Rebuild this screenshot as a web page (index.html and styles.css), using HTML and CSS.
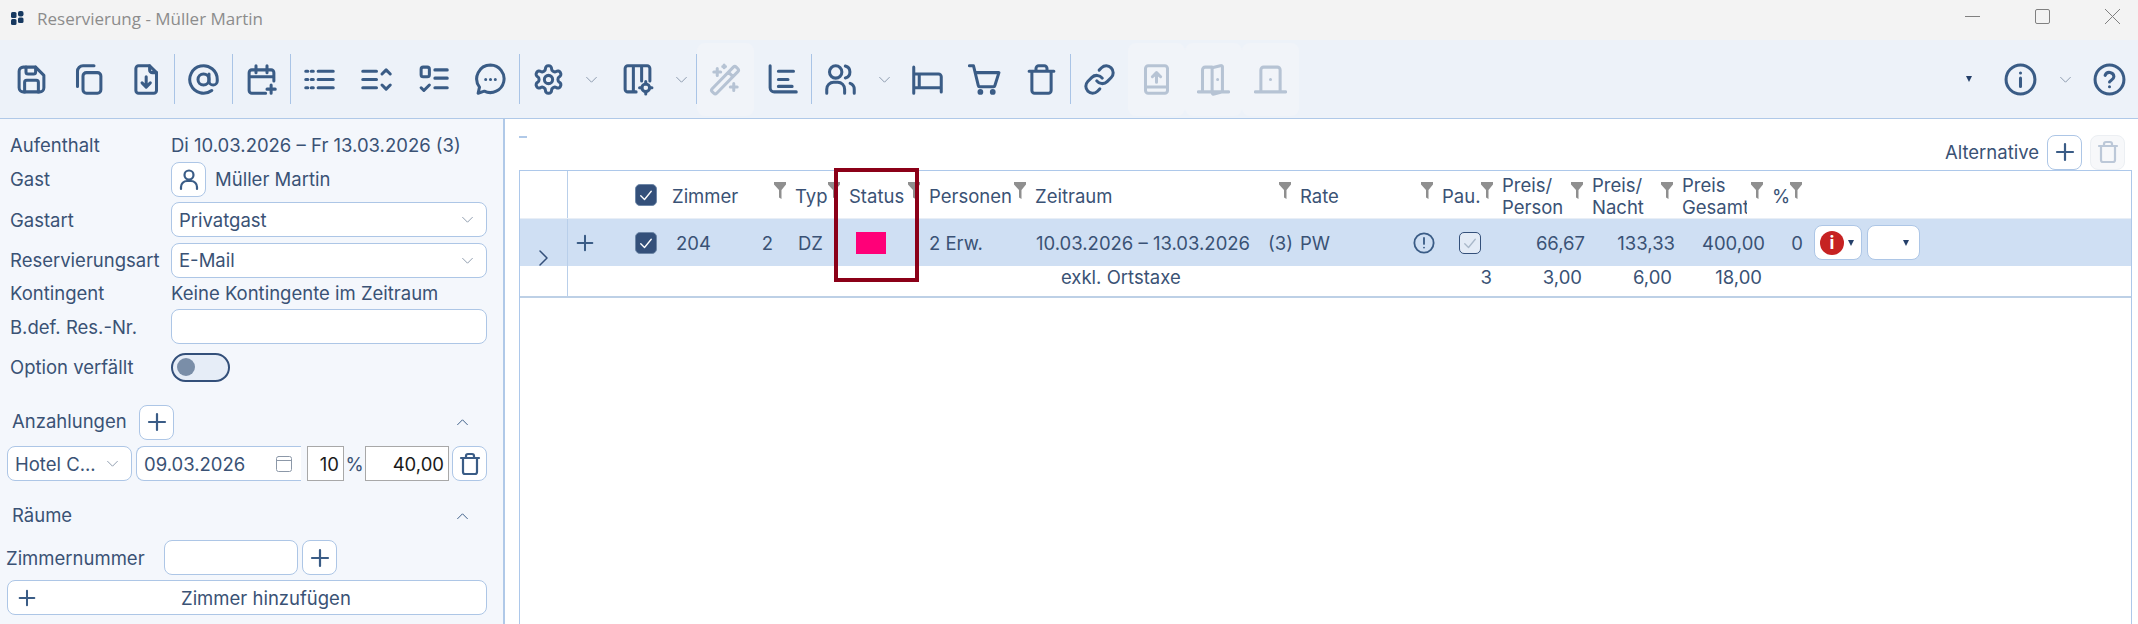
FILE: index.html
```html
<!DOCTYPE html>
<html lang="de">
    <head>
        <meta charset="UTF-8" />
        <title>Reservierung - Müller Martin</title>
        <link rel="stylesheet" href="styles.css">
    </head>
    <body>
        <!-- Shared icons -->
        <svg class="sprite">
            <symbol id="i-plus" viewBox="0 0 24 24"><path d="M12 4v16M4 12h16"/></symbol>
            <symbol id="i-down" viewBox="0 0 24 24"><path d="M3 8l9 9 9-9"/></symbol>
            <symbol id="i-up" viewBox="0 0 24 24"><path d="M3 16l9-9 9 9"/></symbol>
            <symbol id="i-trash" viewBox="0 0 24 24"><path d="M3 6h18M8 6V4a2 2 0 0 1 2-2h4a2 2 0 0 1 2 2v2M5 6v14a2 2 0 0 0 2 2h10a2 2 0 0 0 2-2V6"/></symbol>
            <symbol id="i-filter" viewBox="0 0 12 17"><path d="M0 0h12v2.5L7.5 8v9L5 15.5V8L0 2.5z"/></symbol>
            <symbol id="i-check" viewBox="0 0 24 24"><path d="M5 13l5 5 9-11"/></symbol>
        </svg>

        <!-- Title bar -->
        <div class="titlebar">
            <svg class="logo" viewBox="0 0 13 14"><rect x="0" y="1" width="5.5" height="6" rx="1.5"/><rect x="7" y="0" width="5.5" height="5.5" rx="2"/><rect x="0" y="8" width="5.5" height="6" rx="1.5"/><rect x="7" y="6.5" width="5.5" height="5.5" rx="1.5"/></svg>
            <span class="title-text">Reservierung - Müller Martin</span>
            <div class="win-controls">
                <svg viewBox="0 0 15 15"><path d="M0 7.5h15"/></svg>
                <svg viewBox="0 0 15 15"><rect x="0.5" y="0.5" width="14" height="14" rx="1.5"/></svg>
                <svg viewBox="0 0 15 15"><path d="M0 0l15 15M15 0L0 15"/></svg>
            </div>
        </div>

        <!-- Toolbar -->
        <div class="toolbar">
            <div class="tool"><svg viewBox="0 0 24 24"><path d="M6 3h9l6 6v9a3 3 0 0 1-3 3H6a3 3 0 0 1-3-3V6a3 3 0 0 1 3-3z"/><path d="M7 21v-7a1.5 1.5 0 0 1 1.5-1.5h7A1.5 1.5 0 0 1 17 14v7M8 3v3.5A1.5 1.5 0 0 0 9.500 8h4A1.500 1.500 0 0 0 15 6.500V3"/></svg></div>
            <div class="tool"><svg viewBox="0 0 24 24"><rect x="8" y="7" width="13" height="15" rx="2.500"/><path d="M4 17V6a4 4 0 0 1 4-4h8"/></svg></div>
            <div class="tool"><svg viewBox="0 0 24 24"><path d="M7 2h8l5 5v13a2 2 0 0 1-2 2H7a2 2 0 0 1-2-2V4a2 2 0 0 1 2-2z"/><path d="M15 2v3a2 2 0 0 0 2 2h3M12.500 10v7M9.500 14.500l3 3 3-3"/></svg></div>
            <div class="sep"></div>
            <div class="tool"><svg viewBox="0 0 24 24"><circle cx="12" cy="12" r="4"/><path d="M16 8v5a3 3 0 0 0 6 0v-1a10 10 0 1 0-4 8"/></svg></div>
            <div class="sep"></div>
            <div class="tool"><svg viewBox="0 0 24 24"><path d="M21 13V7a2 2 0 0 0-2-2H5a2 2 0 0 0-2 2v13a2 2 0 0 0 2 2h10M8 2v5M16 2v5M3 10h18M19 16v6M16 19h6"/></svg></div>
            <div class="sep"></div>
            <div class="tool"><svg viewBox="0 0 24 24"><path d="M2 6h1.500M6 6h1.500M11 6h11M2 12h1.500M6 12h1.500M11 12h11M2 18h1.500M6 18h1.500M11 18h11"/></svg></div>
            <div class="tool"><svg viewBox="0 0 24 24"><path d="M2 6h10M2 12h10M2 18h10M16 8l3-3 3 3M16 16l3 3 3-3"/></svg></div>
            <div class="tool"><svg viewBox="0 0 24 24"><rect x="3" y="3" width="6" height="7" rx="1.500"/><path d="M13 5h9M13 11h9M3 18l2 2 4-4M13 18h9"/></svg></div>
            <div class="tool"><svg viewBox="0 0 24 24"><path d="M12 1.500a10 10 0 1 1-4.500 19L3 22l1-4.500A10 10 0 0 1 12 1.500z"/><path d="M8.500 12h.01M12 12h.01M15.500 12h.01"/></svg></div>
            <div class="sep"></div>
            <div class="tool"><svg viewBox="0 0 24 24"><path d="M12.220 2h-.44a2 2 0 0 0-2 2v.18a2 2 0 0 1-1 1.730l-.43.25a2 2 0 0 1-2 0l-.15-.08a2 2 0 0 0-2.730.73l-.22.38a2 2 0 0 0 .73 2.730l.15.1a2 2 0 0 1 1 1.720v.51a2 2 0 0 1-1 1.740l-.15.09a2 2 0 0 0-.73 2.730l.22.38a2 2 0 0 0 2.730.73l.15-.08a2 2 0 0 1 2 0l.43.25a2 2 0 0 1 1 1.730V20a2 2 0 0 0 2 2h.44a2 2 0 0 0 2-2v-.18a2 2 0 0 1 1-1.730l.43-.25a2 2 0 0 1 2 0l.15.08a2 2 0 0 0 2.730-.73l.22-.39a2 2 0 0 0-.73-2.730l-.15-.08a2 2 0 0 1-1-1.740v-.5a2 2 0 0 1 1-1.740l.15-.09a2 2 0 0 0 .73-2.730l-.22-.38a2 2 0 0 0-2.730-.73l-.15.08a2 2 0 0 1-2 0l-.43-.25a2 2 0 0 1-1-1.730V4a2 2 0 0 0-2-2z"/><circle cx="12" cy="12" r="3"/></svg></div>
            <div class="tool-caret wide"><svg viewBox="0 0 24 24"><use href="#i-down"/></svg></div>
            <div class="tool"><svg viewBox="0 0 24 24"><path d="M11 21H5a2 2 0 0 1-2-2V4a2 2 0 0 1 2-2h14a2 2 0 0 1 2 2v9M9 2v19M15 2v11"/><circle cx="18" cy="18" r="2.800"/><path d="M18 13.500v1.700M18 20.800v1.700M13.500 18h1.700M20.800 18h1.700"/></svg></div>
            <div class="tool-caret"><svg viewBox="0 0 24 24"><use href="#i-down"/></svg></div>
            <div class="sep"></div>
            <div class="tool off"><svg viewBox="0 0 24 24"><path d="M3.500 22l-1.200-1.200a1.500 1.500 0 0 1 0-2.100L17.700 3a1.500 1.500 0 0 1 2.100 0l1.200 1.200a1.500 1.500 0 0 1 0 2.100L5.600 22a1.500 1.500 0 0 1-2.100 0zM14.500 7l2.500 2.500M6 4v5M3.500 6.500h5M18 15v5M15.500 17.500h5M11 1.500v2M10 2.500h2"/></svg></div>
            <div class="tool"><svg viewBox="0 0 24 24"><path d="M3 2v16a3 3 0 0 0 3 3h16M9 6h11M9 12h7M9 17h10"/></svg></div>
            <div class="sep"></div>
            <div class="tool"><svg viewBox="0 0 24 24"><path d="M15 22v-3a5 5 0 0 0-5-5H7a5 5 0 0 0-5 5v3"/><circle cx="8.500" cy="6.500" r="4.500"/><path d="M22 22v-3a4.500 4.500 0 0 0-3-4.200M15.500 2.200a4.500 4.500 0 0 1 0 8.700"/></svg></div>
            <div class="tool-caret people"><svg viewBox="0 0 24 24"><use href="#i-down"/></svg></div>
            <div class="tool"><svg viewBox="0 0 24 24"><path d="M2 3v19M22 10v11M2 8h18a2 2 0 0 1 2 2M6 8v10M2 18h20"/></svg></div>
            <div class="tool"><svg viewBox="0 0 24 24"><circle cx="9" cy="21" r="1"/><circle cx="18" cy="21" r="1"/><path d="M1 2h3l3.500 14.500a1 1 0 0 0 1 .8h10a1 1 0 0 0 1-.8L22.500 7H5.500"/></svg></div>
            <div class="tool"><svg viewBox="0 0 24 24"><use href="#i-trash"/></svg></div>
            <div class="sep"></div>
            <div class="tool"><svg viewBox="0 0 24 24"><path d="M10 13a5 5 0 0 0 7.540.54l3-3a5 5 0 0 0-7.070-7.070l-1.720 1.710"/><path d="M14 11a5 5 0 0 0-7.540-.54l-3 3a5 5 0 0 0 7.070 7.070l1.710-1.710"/></svg></div>
            <div class="tool off"><svg viewBox="0 0 24 24"><path d="M6 2h12a2 2 0 0 1 2 2v16a2 2 0 0 1-2 2H6a2 2 0 0 1-2-2V4a2 2 0 0 1 2-2zM4 17.500h16M12 14V7M9 10l3-3 3 3"/></svg></div>
            <div class="tool off"><svg viewBox="0 0 24 24"><path d="M1 21h22M4 21V5a2 2 0 0 1 2-2h5M11 3.500l6-1.500a1 1 0 0 1 1.500 1v18l-6 1.500a1 1 0 0 1-1.500-1zM15 12h.01"/></svg></div>
            <div class="tool off"><svg viewBox="0 0 24 24"><path d="M1 21h22M5 21V5a2 2 0 0 1 2-2h10a2 2 0 0 1 2 2v16M12 12h.01"/></svg></div>

            <div class="toolbar-right">
                <span class="mini-arrow"></span>
                <svg class="round-icon" viewBox="0 0 24 24"><circle cx="12" cy="12" r="10.500"/><path d="M12 11v6M12 7.300h.01"/></svg>
                <div class="right-caret"><svg viewBox="0 0 24 24"><use href="#i-down"/></svg></div>
                <svg class="round-icon" viewBox="0 0 24 24"><circle cx="12" cy="12" r="10.500"/><path d="M8.800 9a3.300 3.300 0 0 1 6.400 1c0 2.200-3.200 2.800-3.200 3.800M12 17.300h.01"/></svg>
            </div>
        </div>

        <div class="content">
            <!-- Left panel -->
            <div class="panel">
                <div class="form">
                    <div>Aufenthalt</div>
                    <div>Di 10.03.2026 – Fr 13.03.2026 (3)</div>
                    <div>Gast</div>
                    <div class="guest">
                        <div class="icon-btn"><svg viewBox="0 0 24 24"><circle cx="12" cy="8" r="4.500"/><path d="M4 22v-2a6 6 0 0 1 6-6h4a6 6 0 0 1 6 6v2"/></svg></div>
                        <span>Müller Martin</span>
                    </div>
                    <div>Gastart</div>
                    <div class="select">Privatgast<svg class="arrow" viewBox="0 0 24 24"><use href="#i-down"/></svg></div>
                    <div>Reservierungsart</div>
                    <div class="select">E-Mail<svg class="arrow" viewBox="0 0 24 24"><use href="#i-down"/></svg></div>
                    <div>Kontingent</div>
                    <div>Keine Kontingente im Zeitraum</div>
                    <div>B.def. Res.-Nr.</div>
                    <div class="select"></div>
                    <div>Option verfällt</div>
                    <div class="toggle"><span class="knob"></span></div>
                </div>

                <!-- Anzahlungen -->
                <div class="section-head first">
                    <span class="section-title">Anzahlungen</span>
                    <div class="icon-btn"><svg viewBox="0 0 24 24"><use href="#i-plus"/></svg></div>
                    <svg class="collapse" viewBox="0 0 24 24"><use href="#i-up"/></svg>
                </div>
                <div class="deposit">
                    <div class="select hotel">Hotel C...<svg class="arrow" viewBox="0 0 24 24"><use href="#i-down"/></svg></div>
                    <div class="select date">09.03.2026<svg class="cal" viewBox="0 0 16 16"><rect x="0.500" y="0.500" width="15" height="15" rx="2"/><path d="M0.500 4.500h15"/></svg></div>
                    <input class="num pct" type="text" value="10" />
                    <span class="pct-sign">%</span>
                    <input class="num amount" type="text" value="40,00" />
                    <div class="icon-btn"><svg viewBox="0 0 24 24"><use href="#i-trash"/></svg></div>
                </div>

                <!-- Räume -->
                <div class="section-head rooms">
                    <span class="section-title">Räume</span>
                    <svg class="collapse" viewBox="0 0 24 24"><use href="#i-up"/></svg>
                </div>
                <div class="room-row">
                    <span class="room-label">Zimmernummer</span>
                    <div class="select room-input"></div>
                    <div class="icon-btn"><svg viewBox="0 0 24 24"><use href="#i-plus"/></svg></div>
                </div>
                <div class="add-room">
                    <svg viewBox="0 0 24 24"><use href="#i-plus"/></svg>
                    <span>Zimmer hinzufügen</span>
                </div>
            </div>

            <!-- Main area -->
            <div class="main">
                <div class="main-head">
                    <span class="dash"></span>
                    <span class="alt-label">Alternative</span>
                    <div class="icon-btn small"><svg viewBox="0 0 24 24"><use href="#i-plus"/></svg></div>
                    <div class="icon-btn small disabled"><svg viewBox="0 0 24 24"><use href="#i-trash"/></svg></div>
                </div>

                <div class="table">
                    <div class="row head">
                        <div class="cell rowhead"></div>
                        <div class="cell"></div>
                        <div class="cell check-cell"><span class="checkbox"><svg viewBox="0 0 24 24"><use href="#i-check"/></svg></span></div>
                        <div class="cell th"><span>Zimmer</span><svg class="filter"><use href="#i-filter"/></svg></div>
                        <div class="cell th"><span>Typ</span><svg class="filter"><use href="#i-filter"/></svg></div>
                        <div class="cell th"><span>Status</span><svg class="filter"><use href="#i-filter"/></svg></div>
                        <div class="cell th"><span>Personen</span><svg class="filter"><use href="#i-filter"/></svg></div>
                        <div class="cell th"><span>Zeitraum</span><svg class="filter"><use href="#i-filter"/></svg></div>
                        <div class="cell th"><span>Rate</span><svg class="filter"><use href="#i-filter"/></svg></div>
                        <div class="cell th"><span>Pau.</span><svg class="filter"><use href="#i-filter"/></svg></div>
                        <div class="cell th"><span>Preis/<br />Person</span><svg class="filter"><use href="#i-filter"/></svg></div>
                        <div class="cell th"><span>Preis/<br />Nacht</span><svg class="filter"><use href="#i-filter"/></svg></div>
                        <div class="cell th"><span class="clip">Preis<br />Gesamt</span><svg class="filter"><use href="#i-filter"/></svg></div>
                        <div class="cell th"><span>%</span><svg class="filter"><use href="#i-filter"/></svg></div>
                        <div class="cell"></div>
                    </div>

                    <div class="row selected">
                        <div class="cell rowhead"><svg class="expand" viewBox="0 0 9 16"><path d="M1 1l7 7-7 7"/></svg></div>
                        <div class="cell"><svg class="row-plus" viewBox="0 0 24 24"><use href="#i-plus"/></svg></div>
                        <div class="cell check-cell"><span class="checkbox"><svg viewBox="0 0 24 24"><use href="#i-check"/></svg></span></div>
                        <div class="cell room-cell"><span>204</span><span>2</span></div>
                        <div class="cell type-cell">DZ</div>
                        <div class="cell"><span class="status-box"></span></div>
                        <div class="cell pad-4">2 Erw.</div>
                        <div class="cell period-cell"><span>10.03.2026 – 13.03.2026</span><span>(3)</span></div>
                        <div class="cell rate-cell"><span>PW</span><svg class="warn" viewBox="0 0 24 24"><circle cx="12" cy="12" r="10.500"/><path d="M12 6.500v6.500M12 17h.01"/></svg></div>
                        <div class="cell"><span class="checkbox light"><svg viewBox="0 0 24 24"><use href="#i-check"/></svg></span></div>
                        <div class="cell num-cell">66,67</div>
                        <div class="cell num-cell">133,33</div>
                        <div class="cell num-cell">400,00</div>
                        <div class="cell num-cell">0</div>
                        <div class="cell action-cell">
                            <div class="drop"><span class="red-info">i</span><span class="mini-arrow"></span></div>
                            <div class="drop blank"><span class="mini-arrow"></span></div>
                        </div>
                    </div>

                    <div class="row sub">
                        <div class="cell rowhead"></div>
                        <div class="cell"></div>
                        <div class="cell"></div>
                        <div class="cell"></div>
                        <div class="cell"></div>
                        <div class="cell"></div>
                        <div class="cell"></div>
                        <div class="cell tax-cell">exkl. Ortstaxe</div>
                        <div class="cell"></div>
                        <div class="cell num-cell">3</div>
                        <div class="cell num-cell">3,00</div>
                        <div class="cell num-cell">6,00</div>
                        <div class="cell num-cell">18,00</div>
                        <div class="cell"></div>
                        <div class="cell"></div>
                    </div>

                    <!-- Red marking over the Status column -->
                    <div class="marker"></div>
                </div>
            </div>
        </div>
    </body>
</html>
```

FILE: styles.css
```css
* {
    margin: 0;
    padding: 0;
    box-sizing: border-box;
}
html, body {
    height: 100%;
    overflow: hidden;
}
body {
    display: flex;
    flex-direction: column;
    font-family: Inter, "Liberation Sans", sans-serif;
    font-size: 18.5px;
    color: #3a5275;
    background-color: white;
}
svg {
    fill: none;
    stroke: #3a5c86;
    stroke-width: 2.2;
    stroke-linecap: round;
    stroke-linejoin: round;
}
.sprite {
    display: none;
}

/* Title bar */
.titlebar {
    height: 40px;
    flex: none;
    display: flex;
    align-items: center;
    padding-left: 11px;
    background-color: #f3f3f3;
}
.logo {
    width: 13px;
    height: 14px;
    margin-bottom: 4px;
    fill: #16385f;
    stroke: none;
}
.title-text {
    margin-left: 13px;
    margin-bottom: 3px;
    font-family: "Open Sans", sans-serif;
    font-size: 17px;
    color: #8c8c8c;
}
.win-controls {
    margin-left: auto;
    padding-right: 18px;
    padding-bottom: 7px;
    display: flex;
    gap: 55px;
}
.win-controls svg {
    width: 15px;
    height: 15px;
    stroke: #808080;
    stroke-width: 1;
    stroke-linecap: butt;
}

/* Toolbar */
.toolbar {
    height: 79px;
    flex: none;
    display: flex;
    align-items: center;
    padding-left: 3px;
    background-color: #edf2f9;
    border-bottom: 1px solid #b0c9e8;
}
.tool {
    width: 57px;
    height: 73px;
    flex: none;
    display: flex;
    align-items: center;
    justify-content: center;
    border-radius: 8px;
}
.tool svg {
    width: 33px;
    height: 33px;
}
.tool.off {
    background-color: #f1f4f9;
}
.tool.off svg {
    stroke: #b6c3d4;
}
.sep {
    width: 1px;
    height: 50px;
    flex: none;
    background-color: #a9c4e6;
}
.tool-caret {
    width: 30px;
    flex: none;
    display: flex;
    justify-content: center;
}
.tool-caret.wide {
    width: 32px;
    padding-right: 4px;
}
.tool-caret svg,
.right-caret svg {
    width: 13px;
    height: 13px;
    stroke: #7f8ea3;
    stroke-width: 1.6;
}
.toolbar-right {
    margin-left: auto;
    padding-right: 12px;
    display: flex;
    align-items: center;
}
.toolbar-right .mini-arrow {
    margin-right: 32px;
}
.round-icon {
    width: 33px;
    height: 33px;
}
.right-caret {
    width: 56px;
    display: flex;
    justify-content: center;
}
.mini-arrow {
    width: 0;
    height: 0;
    border-left: 3.5px solid transparent;
    border-right: 3.5px solid transparent;
    border-top: 6px solid #25406a;
}

.content {
    flex: 1;
    display: flex;
    min-height: 0;
}

/* Left panel */
.panel {
    width: 505px;
    flex: none;
    padding-top: 12px;
    background-color: #f4f7fc;
    border-right: 2px solid #b0c9e8;
}
.form {
    display: grid;
    grid-template-columns: 161px 316px;
    grid-template-rows: 28px 40px 41px 40px 26px 41px 40px;
    align-items: center;
    margin-left: 10px;
}
.guest {
    display: flex;
    align-items: center;
    gap: 9px;
}
.select {
    height: 35px;
    display: flex;
    align-items: center;
    justify-content: space-between;
    padding: 0 12px 0 7px;
    background-color: white;
    border: 1px solid #adc6e6;
    border-radius: 8px;
}
.arrow {
    width: 13px;
    height: 13px;
    stroke: #7f8ea3;
    stroke-width: 1.6;
}
.icon-btn {
    width: 35px;
    height: 35px;
    flex: none;
    display: flex;
    align-items: center;
    justify-content: center;
    background-color: white;
    border: 1px solid #adc6e6;
    border-radius: 8px;
}
.icon-btn svg {
    width: 24px;
    height: 24px;
}
.icon-btn.disabled {
    background-color: #f7f8fa;
    border-color: #eceff3;
}
.icon-btn.disabled svg {
    stroke: #bcc8d8;
}
.toggle {
    width: 59px;
    height: 29px;
    padding-left: 4px;
    display: flex;
    align-items: center;
    background-color: #e6edf7;
    border: 2px solid #34507a;
    border-radius: 15px;
}
.knob {
    width: 18px;
    height: 18px;
    border-radius: 50%;
    background-color: #7a8ea8;
}

/* Sections of the panel */
.section-head {
    height: 36px;
    display: flex;
    align-items: center;
    padding-left: 12px;
    padding-right: 34px;
}
.section-head.first {
    margin-top: 17px;
}
.section-head.rooms {
    margin-top: 17px;
}
.section-title {
    width: 127px;
    padding-bottom: 2px;
}
.collapse {
    width: 13px;
    height: 13px;
    margin-left: auto;
    stroke-width: 1.8;
}
.deposit {
    display: flex;
    align-items: center;
    margin-top: 6px;
    padding-left: 7px;
}
.hotel {
    width: 125px;
    white-space: nowrap;
}
.date {
    width: 165px;
    margin-left: 4px;
    border-right: none;
    border-top-right-radius: 0;
    border-bottom-right-radius: 0;
    padding-right: 9px;
}
.cal {
    width: 16px;
    height: 16px;
    stroke: #8c98a8;
    stroke-width: 1;
}
.num {
    height: 35px;
    padding: 0 4px;
    font: inherit;
    color: #1a1a1a;
    text-align: right;
    background-color: white;
    border: 1px solid #a8a8a8;
}
.pct {
    width: 37px;
    margin-left: 6px;
}
.pct-sign {
    width: 21px;
    text-align: center;
}
.amount {
    width: 84px;
    margin-right: 3px;
}
.room-row {
    display: flex;
    align-items: center;
    gap: 4px;
    margin-top: 6px;
    padding-left: 6px;
}
.room-label {
    width: 154px;
}
.room-input {
    width: 134px;
}
.add-room {
    width: 480px;
    height: 35px;
    margin: 5px 0 0 7px;
    padding-left: 8px;
    display: flex;
    align-items: center;
    background-color: white;
    border: 1px solid #adc6e6;
    border-radius: 8px;
}
.add-room svg {
    width: 22px;
    height: 22px;
}
.add-room span {
    margin-left: 143px;
}

/* Main area */
.main {
    flex: 1;
    min-width: 0;
    padding: 15px 6px 0 14px;
}
.main-head {
    height: 36px;
    display: flex;
    align-items: center;
    gap: 8px;
    padding-right: 7px;
}
.dash {
    width: 8px;
    height: 2px;
    margin-bottom: 30px;
    background-color: #b0c9e8;
}
.alt-label {
    margin-left: auto;
}

/* Table */
.table {
    height: 460px;
    position: relative;
    border: 1px solid #adc8ea;
    border-bottom: none;
}
.row {
    display: grid;
    grid-template-columns: 48px 63px 37px 123px 54px 80px 106px 265px 142px 60px 90px 90px 90px 38px 1fr;
}
.row.head {
    height: 48px;
    border-bottom: 1px solid #e8eef6;
}
.row.selected {
    height: 47px;
    background-color: #cfdff3;
}
.row.sub {
    height: 30px;
    box-sizing: content-box;
    border-bottom: 2px solid #bdd0e6;
}
.cell {
    display: flex;
    align-items: center;
    min-width: 0;
    white-space: nowrap;
}
.rowhead {
    border-right: 1px solid #b9cfea;
    justify-content: center;
}
.th {
    justify-content: space-between;
    padding: 2px 5px 0 4px;
    line-height: 22px;
}
.clip {
    width: 65px;
    overflow: hidden;
    white-space: nowrap;
}
.filter {
    width: 12px;
    height: 17px;
    flex: none;
    align-self: flex-start;
    margin-top: 9px;
    fill: #8f8f8f;
    stroke: none;
}
.check-cell {
    padding-left: 4px;
}
.checkbox {
    width: 22px;
    height: 22px;
    display: flex;
    align-items: center;
    justify-content: center;
    background-color: #34507a;
    border: 1px solid #6f88a8;
    border-radius: 5px;
}
.checkbox svg {
    width: 18px;
    height: 18px;
    stroke: white;
    stroke-width: 1.8;
}
.checkbox.light {
    margin-left: 21px;
    background-color: #e3ebf6;
    border-color: #34507a;
}
.checkbox.light svg {
    stroke: #a9b8c9;
}
.row-plus {
    width: 22px;
    height: 22px;
    margin-left: 6px;
}
.expand {
    width: 9px;
    height: 16px;
    margin-top: 30px;
    stroke: #34507a;
    stroke-width: 1.5;
}
.room-cell {
    justify-content: space-between;
    padding: 0 18px 0 8px;
}
.type-cell {
    padding-left: 7px;
}
.status-box {
    width: 30px;
    height: 22px;
    margin-left: 11px;
    background-color: #ff0078;
}
.pad-4 {
    padding-left: 4px;
}
.period-cell {
    justify-content: space-between;
    padding: 0 3px 0 5px;
}
.rate-cell {
    justify-content: space-between;
    padding: 0 3px 0 4px;
}
.warn {
    width: 22px;
    height: 22px;
    stroke-width: 2;
}
.num-cell {
    justify-content: flex-end;
    padding-right: 3px;
}
.sub .cell {
    align-items: flex-start;
    line-height: 22px;
}
.sub .num-cell {
    padding-right: 6px;
}
.tax-cell {
    padding-left: 30px;
}
.action-cell {
    gap: 5px;
    padding-left: 8px;
}
.drop {
    width: 48px;
    height: 35px;
    display: flex;
    align-items: center;
    justify-content: space-between;
    padding: 0 7px 0 5px;
    background-color: white;
    border: 1px solid #adc6e6;
    border-radius: 8px;
}
.drop.blank {
    width: 53px;
    justify-content: flex-end;
    padding-right: 10px;
}
.red-info {
    width: 24px;
    height: 24px;
    border-radius: 50%;
    background-color: #c62222;
    color: white;
    font-weight: 700;
    font-size: 18px;
    line-height: 24px;
    text-align: center;
}
.marker {
    position: absolute;
    left: 314px;
    top: -3px;
    width: 85px;
    height: 114px;
    border: 4px solid #8b0018;
}
```
